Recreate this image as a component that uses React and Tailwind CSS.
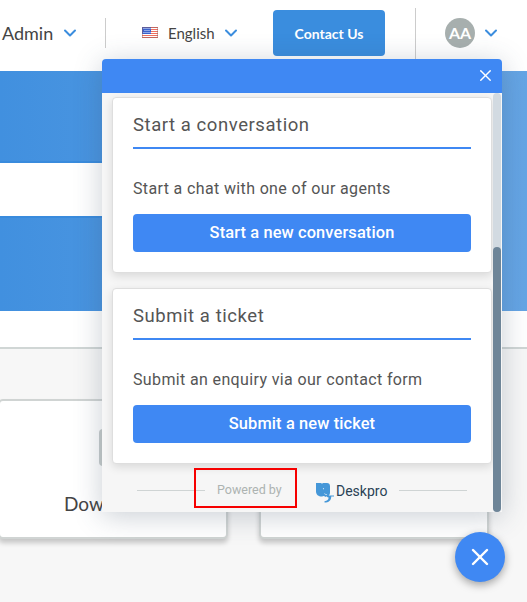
import { ChevronDown, X } from "lucide-react";

function Chevron({ className = "" }) {
  return <ChevronDown className={`shrink-0 text-[#3b8dde] ${className}`} size={20} strokeWidth={2.4} />;
}

function Flag() {
  return (
    <svg className="-mt-px ml-[36px] shrink-0" width="16" height="11" viewBox="0 0 16 11">
      <rect width="16" height="11" fill="#fff" />
      <path d="M0 .5h16M0 2.5h16M0 4.5h16M0 6.5h16M0 8.5h16M0 10.5h16" stroke="#ee6f60" />
      <rect width="9" height="7" fill="#3b62cc" />
      <path d="M1.5 1.5h7M2.5 3.5h6M1.5 5.5h7" stroke="#e4ebff" strokeDasharray="1 1" />
      <rect x=".5" y=".5" width="15" height="10" fill="none" stroke="#8b5a60" strokeOpacity=".45" />
    </svg>
  );
}

function Header() {
  return (
    <header className="flex h-[71px] items-start bg-white text-[#444]">
      <div className="flex h-[66px] items-center pl-[2px]">
        <span className="w-[52px] whitespace-nowrap text-[18px]">Admin</span>
        <Chevron className="ml-[6px]" />
      </div>
      <div className="mt-[18px] ml-[25px] h-[30px] w-px bg-[#ccc]" />
      <div className="flex h-[66px] items-center">
        <Flag />
        <span className="ml-[10px] w-[47px] whitespace-nowrap text-[15px]">English</span>
        <Chevron className="ml-[6px]" />
      </div>
      <button className="mt-[10px] ml-[32px] h-[46px] w-[112px] rounded-[4px] bg-[#3a8dde] text-[14px] font-bold text-white">
        Contact Us
      </button>
      <div className="mt-[8px] ml-[30px] h-[60px] w-px bg-[#ccc]" />
      <div className="flex h-[66px] items-center">
        <span className="ml-[29px] flex size-[30px] items-center justify-center rounded-full bg-[#a7afae] text-[16px] font-bold text-white">
          AA
        </span>
        <Chevron className="ml-[6px]" />
      </div>
    </header>
  );
}

function DeskproMark() {
  return (
    <svg width="20" height="21" viewBox="0 0 20 21" className="shrink-0">
      <path
        d="M1 1h5l1 .8L8 1h4C13.8 1 15 2.2 15 4.2v6.3c0 1.8-.8 3-2 3.6l-1-.5-1 1.4-2.2-.9-1.8.5C3.4 14.6 1 12.5 1 9.5z"
        fill="#4597d8"
      />
      <path d="M12.4 11.4c.2 1.5 1.1 2.1 2.8 2.1H19v1h-2.7c-.3 4-2.4 6-6.8 6v-1.2c2.7-.3 4.1-1.7 4.1-3.7-1.5-.2-2.3-1-2.3-2.6z" fill="#4597d8" />
      <path d="M9.4 11.6c1 .9 1.9 1.2 2.7.7" stroke="#e6f1fa" fill="none" strokeWidth=".8" />
      <circle cx="8.5" cy="6.7" r=".6" fill="#cfe4f5" />
    </svg>
  );
}

function ActionCard({ title, text, action, titleClass, textClass, actionClass }) {
  return (
    <section className="h-[176px] w-[380px] shrink-0 rounded-[4px] border border-[#dedede] bg-white px-[20px] text-[#555] shadow-[0_3px_10px_rgba(0,0,0,0.12)]">
      <h2 className={`h-[51px] border-b-2 border-[#3f88f3] pt-[13px] text-[18.5px] leading-[28px] whitespace-nowrap ${titleClass}`}>
        {title}
      </h2>
      <p className={`mt-[28px] text-[16px] leading-[24px] whitespace-nowrap ${textClass}`}>{text}</p>
      <button className={`mt-[13px] block h-[38px] w-[338px] rounded-[4px] bg-[#3f88f3] text-[16.4px] leading-[38px] font-medium text-white ${actionClass}`}>
        {action}
      </button>
    </section>
  );
}

function Widget() {
  return (
    <div className="absolute top-[59px] left-[102px] h-[453px] w-[400px] overflow-hidden rounded-t-[4px] bg-[#f6f6f6] font-[Roboto,sans-serif]">
      <div className="flex h-[34px] items-center justify-end bg-[#3f88f3] pr-[7px] pb-[2px] text-white">
        <X size={19} strokeWidth={1.7} />
      </div>
      <div className="flex h-[419px]">
        <div className="flex w-[391px] flex-col pt-[4px] pl-[10px]">
          <ActionCard
            title="Start a conversation"
            text="Start a chat with one of our agents"
            action="Start a new conversation"
            titleClass="tracking-[0.56px]"
            textClass="tracking-[0.36px]"
            actionClass="tracking-[0.12px]"
          />
          <div className="h-[15px] shrink-0" />
          <ActionCard
            title="Submit a ticket"
            text="Submit an enquiry via our contact form"
            action="Submit a new ticket"
            titleClass="tracking-[0.56px]"
            textClass="tracking-[0.36px]"
            actionClass="tracking-[0.12px]"
          />
          <div className="mt-[4px] flex h-[44px] shrink-0 items-center">
            <div className="ml-[25px] h-px w-[68px] bg-[#cfd4d4]" />
            <span className="mt-px ml-[12px] w-[65px] text-[12.5px] whitespace-nowrap text-[#adb3b1]">Powered by</span>
            <div className="mt-[-1px] ml-[14px] h-[24px] w-px bg-[#dfe2e2]" />
            <div className="mt-[4px] ml-[18px] flex">
              <DeskproMark />
            </div>
            <span className="mt-[3px] ml-[1px] w-[51px] text-[14px] whitespace-nowrap text-[#2a4255]">Deskpro</span>
            <div className="ml-[12px] h-px w-[68px] bg-[#cfd4d4]" />
          </div>
        </div>
        <div className="h-[419px] w-[8px] shrink-0 rounded-[4px] bg-[#d2dae1] pt-[154px]">
          <div className="h-[265px] rounded-[4px] bg-[#6e8598]" />
        </div>
      </div>
    </div>
  );
}

export default function App() {
  return (
    <div className="relative h-[602px] w-[527px] overflow-hidden bg-white font-[Lato,sans-serif]">
      <Header />
      <div className="h-[240px] bg-linear-to-r from-[#4190df] to-[#65a5e5] pt-[90px]">
        <div className="h-[57px] w-[440px] border-y-2 border-[#398bdd] bg-white" />
      </div>
      <div className="h-[36px]" />
      <div className="h-[255px] border-t-2 border-[#d0d6d5] bg-[#f7f7f7] pt-[50px]">
        <div className="-ml-[2px] flex gap-[31px]">
          <div className="h-[140px] w-[230px] shrink-0 rounded-[5px] border-2 border-[#d0d4d3] bg-white shadow-[0_4px_5px_rgba(0,0,0,0.2)]">
            <div className="mt-[28px] ml-[99px] h-[37px] w-[32px] rounded-[4px] bg-[#c7cdcc]" />
            <div className="mt-[25px] ml-[64px] text-[19px] leading-[26px] text-[#444]">Downloads</div>
          </div>
          <div className="h-[140px] w-[230px] shrink-0 rounded-[5px] border-2 border-[#d0d4d3] bg-white shadow-[0_4px_5px_rgba(0,0,0,0.2)]" />
        </div>
      </div>
      <div className="absolute top-[59px] left-[102px] h-[453px] w-[400px] rounded-t-[4px] shadow-[0_4px_28px_rgba(60,80,100,0.28)]" />
      <Widget />
      <div className="absolute top-[468px] left-[194px] h-[40px] w-[103px] border-2 border-[#f60000]" />
      <div className="absolute top-[532px] left-[455px] flex size-[50px] items-center justify-center rounded-full bg-[#3f88f3] text-white shadow-[0_3px_8px_rgba(0,0,0,0.35)]">
        <X size={28} strokeWidth={2.1} />
      </div>
    </div>
  );
}
